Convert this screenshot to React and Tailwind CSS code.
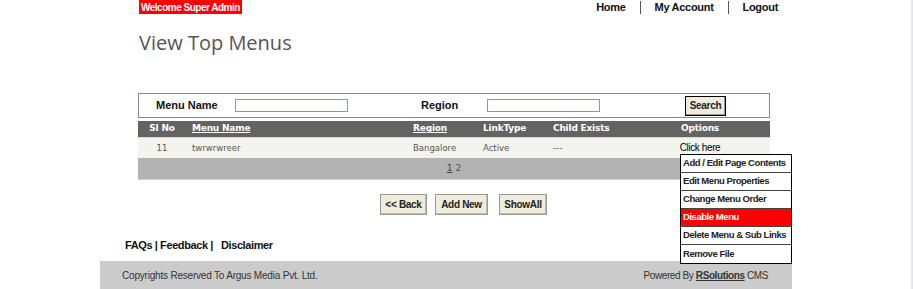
import React from 'react';

const menuItems = [
  'Add / Edit Page Contents',
  'Edit Menu Properties',
  'Change Menu Order',
  'Disable Menu',
  'Delete Menu & Sub Links',
  'Remove File',
];

const sans = 'font-["Liberation_Sans",Arial,sans-serif]';
const verdana = 'font-["DejaVu_Sans",Verdana,sans-serif]';

const App = () => {
  return (
    <div className="flex min-h-[289px] bg-white">
      <div className="w-[911px]">
        <div className="ml-[100px] w-[692px]">
          {/* top bar */}
          <div className={`flex h-[14px] items-start justify-between ${sans}`}>
            <div className="ml-[39px] flex h-[14px] items-center bg-[#ff0000] px-[2px] text-[10px] font-bold tracking-[-0.5px] text-white">
              Welcome Super Admin
            </div>
            <div className="mr-[14px] mt-[1px] flex items-center text-[11px] font-bold leading-[13px] tracking-[-0.3px] text-[#111]">
              <span>Home</span>
              <span className="mx-[14px] h-[13px] w-px bg-[#555]" />
              <span>My Account</span>
              <span className="mx-[14px] h-[13px] w-px bg-[#555]" />
              <span>Logout</span>
            </div>
          </div>

          <h1 className='ml-[39px] mt-[17px] font-["Open_Sans",sans-serif] text-[20px] leading-[24px] text-[#555]'>
            View Top Menus
          </h1>

          {/* search box */}
          <div className={`ml-[38px] mt-[38px] flex h-[25px] w-[632px] items-center border border-[#7b8f7b] ${sans} text-[11px] font-bold text-[#111]`}>
            <span className="ml-[17px] w-[79px]">Menu Name</span>
            <div className="h-[13px] w-[113px] border border-[#8c9c8c] bg-white" />
            <span className="ml-[73px] w-[66px]">Region</span>
            <div className="h-[13px] w-[113px] border border-[#8c9c8c] bg-white" />
            <button className="ml-[85px] flex h-[20px] w-[41px] items-center justify-center border border-black bg-[#efecdc] text-[10px] font-bold tracking-[-0.3px] text-[#222] shadow-[inset_-1px_-1px_0_#999]">
              Search
            </button>
          </div>

          {/* table */}
          <div className={`ml-[38px] mt-[3px] w-[632px] ${verdana}`}>
            <div className="grid h-[16px] grid-cols-[48px_221px_70px_70px_83px_140px] items-center bg-[#636363] text-[9px] font-bold tracking-[-0.2px] text-white">
              <span className="text-center">Sl No</span>
              <span className="pl-[6px] underline">Menu Name</span>
              <span className="pl-[6px] underline">Region</span>
              <span className="pl-[6px]">LinkType</span>
              <span className="pl-[6px]">Child Exists</span>
              <span className="text-center">Options</span>
            </div>
            <div className="grid h-[21px] grid-cols-[48px_221px_70px_70px_83px_140px] items-stretch border-t border-[#d8d8d0] bg-[#f4f4ee] text-[8.5px] text-[#555]">
              <span className="flex items-center justify-center">11</span>
              <span className="flex items-center pl-[6px]">twrwrwreer</span>
              <span className="flex items-center pl-[6px]">Bangalore</span>
              <span className="flex items-center pl-[6px]">Active</span>
              <span className="flex items-center pl-[6px]">---</span>
              <div className="relative">
                <div className={`pt-[4px] text-center ${sans} text-[10px] leading-[12px] tracking-[-0.4px] text-black`}>Click here</div>
                <div className={`absolute left-[50px] top-[16px] z-10 w-[112px] border border-black bg-white text-left ${sans}`}>
                  {menuItems.map((item, i) => (
                    <div
                      key={item}
                      className={`flex h-[18px] items-center whitespace-nowrap pl-[2px] text-[9.5px] font-bold tracking-[-0.45px] ${
                        i < menuItems.length - 1 ? 'border-b border-[#444]' : ''
                      } ${item === 'Disable Menu' ? 'bg-[#ff0000] text-white' : 'text-[#222]'}`}
                    >
                      {item}
                    </div>
                  ))}
                </div>
              </div>
            </div>
            <div className="flex h-[22px] items-center justify-center border-b border-[#d0d0d0] bg-[#b3b3b3] text-[9px] text-[#444]">
              <span className="underline">1</span>
              <span className="ml-[3px] text-[#555]">2</span>
            </div>
          </div>

          {/* buttons */}
          <div className={`ml-[280px] mt-[14px] flex h-[21px] items-stretch ${sans} text-[10px] font-bold tracking-[-0.3px] text-[#222]`}>
            <button className="w-[47px] border border-[#999] bg-[#efecdc] shadow-[inset_-1px_-1px_0_#bbb]">&lt;&lt; Back</button>
            <button className="ml-[8px] w-[53px] border border-[#999] bg-[#efecdc] shadow-[inset_-1px_-1px_0_#bbb]">Add New</button>
            <button className="ml-[11px] w-[48px] border border-[#999] bg-[#efecdc] shadow-[inset_-1px_-1px_0_#bbb]">ShowAll</button>
          </div>

          {/* footer links */}
          <div className={`ml-[25px] mt-[24px] h-[12px] ${sans} text-[11px] font-bold leading-[12px] tracking-[-0.4px] text-[#111]`}>
            FAQs | Feedback |&nbsp;&nbsp; Disclaimer
          </div>

          {/* footer band */}
          <div className={`mt-[10px] flex h-[28px] items-center justify-between bg-[#cbcbcb] px-[22px] ${sans} text-[10px] tracking-[-0.2px] text-[#333]`}>
            <span>Copyrights Reserved To Argus Media Pvt. Ltd.</span>
            <span className="mr-[2px] tracking-[-0.4px]">
              Powered By <span className="font-bold underline">RSolutions</span> CMS
            </span>
          </div>
        </div>
      </div>
      <div className="w-[2px] bg-[#dfe7f3]" />
    </div>
  );
};

export default App;
